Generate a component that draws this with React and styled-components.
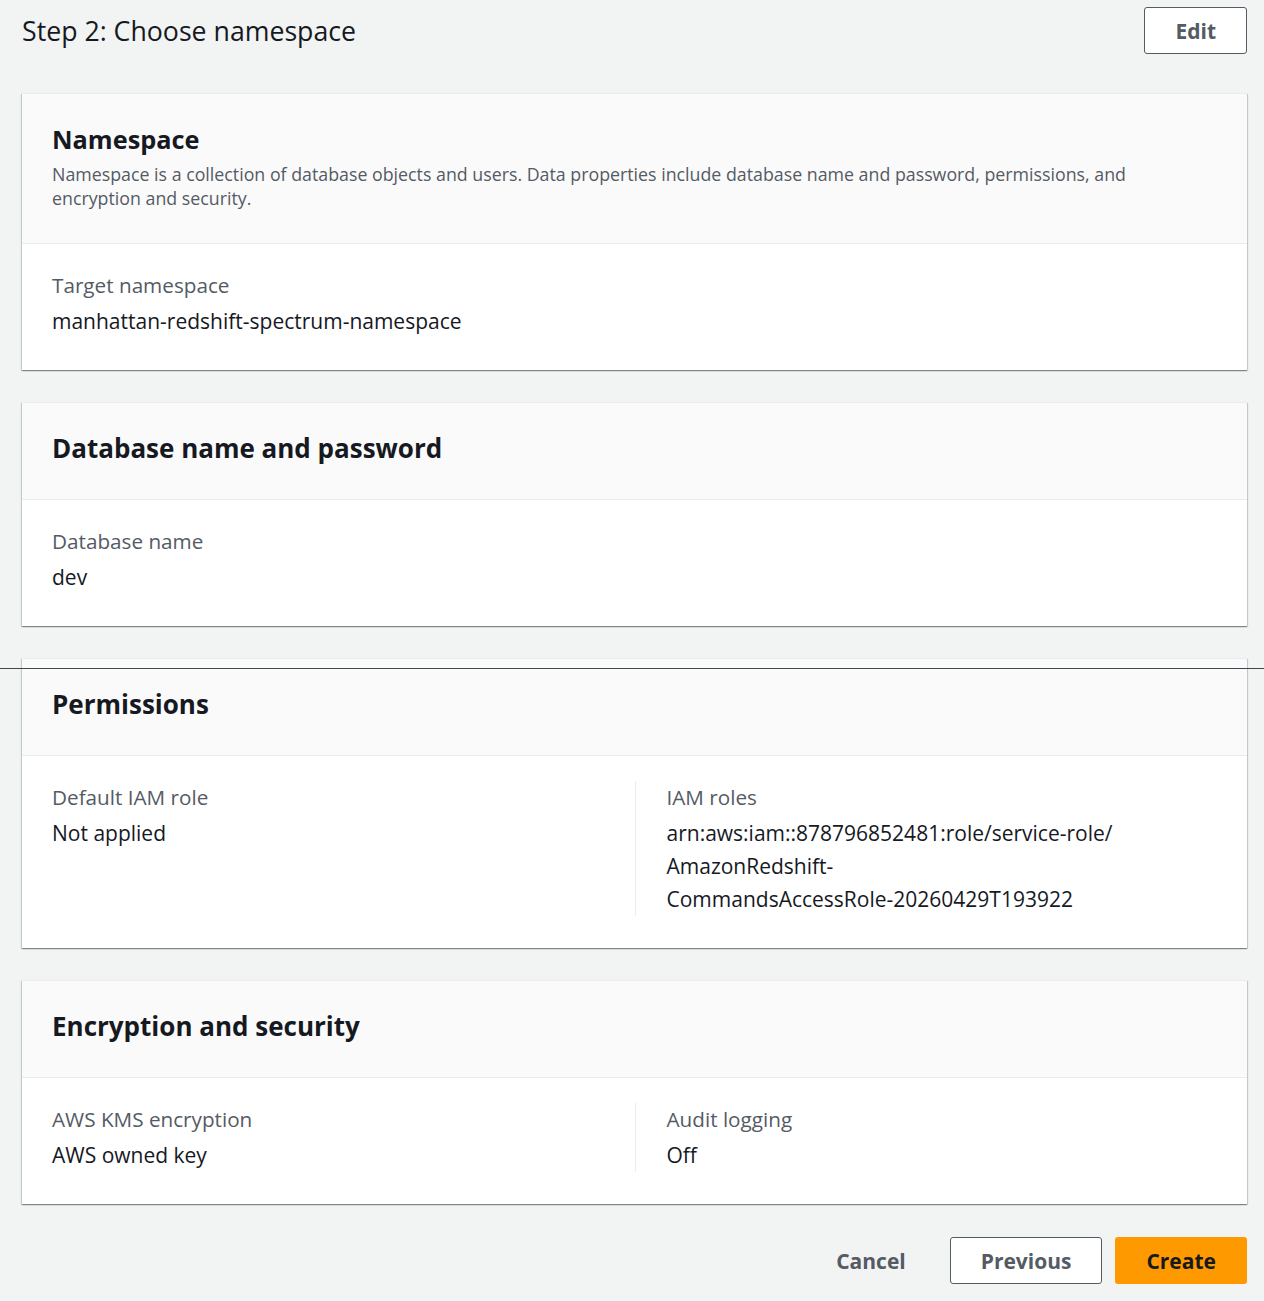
import React from 'react'
import styled, { createGlobalStyle } from 'styled-components'

const GlobalStyle = createGlobalStyle`
  * { box-sizing: border-box; }
  html, body {
    margin: 0;
    padding: 0;
    background: #f2f3f3;
    font-family: "Open Sans", "Noto Sans", Arial, sans-serif;
    color: #16191f;
  }
`

const Page = styled.div`
  position: relative;
  padding: 7px 17px 16px 22px;
`

const TopBar = styled.div`
  display: flex;
  align-items: center;
  justify-content: space-between;
  height: 47px;
  margin-bottom: 39px;
`

const PageTitle = styled.h2`
  margin: 0;
  font-size: 26.7px;
  font-weight: 400;
  color: #16191f;
`

const Button = styled.button`
  height: 47px;
  padding: 0 30px;
  font-family: inherit;
  font-size: 21px;
  font-weight: 700;
  border-radius: 3px;
  cursor: pointer;
  border: 1px solid ${p => (p.$variant === 'normal' ? '#545b64' : 'transparent')};
  background: ${p => (p.$variant === 'primary' ? '#ff9900' : p.$variant === 'normal' ? '#fff' : 'transparent')};
  color: ${p => (p.$variant === 'primary' ? '#16191f' : '#545b64')};
`

const Stack = styled.div`
  display: flex;
  flex-direction: column;
  gap: 32px;
`

const Card = styled.section`
  background: #fff;
  border-top: 1px solid #eaeded;
  box-shadow: 0 1px 1px 0 rgba(0, 28, 36, 0.3), 1px 1px 1px 0 rgba(0, 28, 36, 0.15),
    -1px 1px 1px 0 rgba(0, 28, 36, 0.15);
`

const CardHeader = styled.div`
  background: #fafafa;
  border-bottom: 1px solid #eaeded;
  padding: 27px 30px 33px;
`

const CardTitle = styled.h3`
  margin: 0;
  font-size: ${p => (p.$small ? '25.3px' : '26px')};
  line-height: 36px;
  font-weight: 700;
  color: #16191f;
`

const Description = styled.p`
  margin: 5px 0 0;
  font-size: 17.8px;
  line-height: 24px;
  color: #545b64;
  padding-right: 60px;
`

const CardBody = styled.div`
  display: grid;
  grid-template-columns: ${p => (p.$cols === 2 ? '1fr 1fr' : '1fr')};
  padding: 25px 30px 32px;
`

const Column = styled.div`
  & + & {
    border-left: 1px solid #eaeded;
    padding-left: 31px;
  }
`

const Label = styled.div`
  font-size: 20.7px;
  line-height: 32px;
  color: #545b64;
  margin-bottom: 4px;
`

const Value = styled.div`
  font-size: 21px;
  line-height: 33px;
  color: #16191f;
`

const Footer = styled.div`
  display: flex;
  justify-content: flex-end;
  gap: 13px;
  margin-top: 33px;
`

const Rule = styled.div`
  position: absolute;
  left: 0;
  right: 0;
  top: 668px;
  height: 1px;
  background: #414750;
`

function Field({ label, children }) {
  return (
    <Column>
      <Label>{label}</Label>
      <Value>{children}</Value>
    </Column>
  )
}

export default function App() {
  return (
    <>
      <GlobalStyle />
      <Page>
        <TopBar>
          <PageTitle>Step 2: Choose namespace</PageTitle>
          <Button $variant="normal">Edit</Button>
        </TopBar>

        <Stack>
          <Card>
            <CardHeader>
              <CardTitle $small>Namespace</CardTitle>
              <Description>
                Namespace is a collection of database objects and users. Data properties include database name and
                password, permissions, and encryption and security.
              </Description>
            </CardHeader>
            <CardBody>
              <Field label="Target namespace">manhattan-redshift-spectrum-namespace</Field>
            </CardBody>
          </Card>

          <Card>
            <CardHeader>
              <CardTitle>Database name and password</CardTitle>
            </CardHeader>
            <CardBody>
              <Field label="Database name">dev</Field>
            </CardBody>
          </Card>

          <Card>
            <CardHeader>
              <CardTitle>Permissions</CardTitle>
            </CardHeader>
            <CardBody $cols={2}>
              <Field label="Default IAM role">Not applied</Field>
              <Field label="IAM roles">
                arn:aws:iam::878796852481:role/service-role/
                <br />
                AmazonRedshift-
                <br />
                CommandsAccessRole-20260429T193922
              </Field>
            </CardBody>
          </Card>

          <Card>
            <CardHeader>
              <CardTitle>Encryption and security</CardTitle>
            </CardHeader>
            <CardBody $cols={2}>
              <Field label="AWS KMS encryption">AWS owned key</Field>
              <Field label="Audit logging">Off</Field>
            </CardBody>
          </Card>
        </Stack>

        <Footer>
          <Button $variant="link">Cancel</Button>
          <Button $variant="normal">Previous</Button>
          <Button $variant="primary">Create</Button>
        </Footer>

        <Rule />
      </Page>
    </>
  )
}
